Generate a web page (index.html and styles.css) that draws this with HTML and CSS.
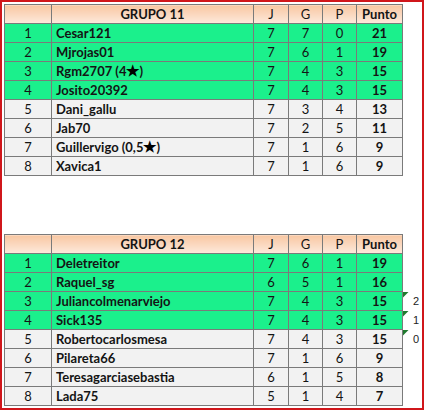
FILE: index.html
```html
<!DOCTYPE html>
<html lang="es">
<head>
<meta charset="utf-8">
<title>Grupos</title>
<link rel="stylesheet" href="styles.css">
</head>
<body>
<div class="frame">
  <table class="grp">
    <colgroup><col class="c-pos"><col class="c-name"><col class="c-j"><col class="c-g"><col class="c-p"><col class="c-pts"><col class="c-note"></colgroup>
    <thead>
      <tr class="head"><th></th><th>GRUPO 11</th><th class="reg">J</th><th class="reg">G</th><th class="reg">P</th><th>Punto</th><td class="note"></td></tr>
    </thead>
    <tbody>
      <tr class="up"><td>1</td><td class="name">Cesar121</td><td>7</td><td>7</td><td>0</td><td class="pts">21</td><td class="note"></td></tr>
      <tr class="up"><td>2</td><td class="name">Mjrojas01</td><td>7</td><td>6</td><td>1</td><td class="pts">19</td><td class="note"></td></tr>
      <tr class="up"><td>3</td><td class="name">Rgm2707 (4<span class="star">★</span>)</td><td>7</td><td>4</td><td>3</td><td class="pts">15</td><td class="note"></td></tr>
      <tr class="up"><td>4</td><td class="name">Josito20392</td><td>7</td><td>4</td><td>3</td><td class="pts">15</td><td class="note"></td></tr>
      <tr><td>5</td><td class="name">Dani_gallu</td><td>7</td><td>3</td><td>4</td><td class="pts">13</td><td class="note"></td></tr>
      <tr><td>6</td><td class="name">Jab70</td><td>7</td><td>2</td><td>5</td><td class="pts">11</td><td class="note"></td></tr>
      <tr><td>7</td><td class="name">Guillervigo (0,5<span class="star">★</span>)</td><td>7</td><td>1</td><td>6</td><td class="pts">9</td><td class="note"></td></tr>
      <tr><td>8</td><td class="name">Xavica1</td><td>7</td><td>1</td><td>6</td><td class="pts">9</td><td class="note"></td></tr>
    </tbody>
  </table>

  <table class="grp second">
    <colgroup><col class="c-pos"><col class="c-name"><col class="c-j"><col class="c-g"><col class="c-p"><col class="c-pts"><col class="c-note"></colgroup>
    <thead>
      <tr class="head"><th></th><th>GRUPO 12</th><th class="reg">J</th><th class="reg">G</th><th class="reg">P</th><th>Punto</th><td class="note"></td></tr>
    </thead>
    <tbody>
      <tr class="up"><td>1</td><td class="name">Deletreitor</td><td>7</td><td>6</td><td>1</td><td class="pts">19</td><td class="note"></td></tr>
      <tr class="up"><td>2</td><td class="name">Raquel_sg</td><td>6</td><td>5</td><td>1</td><td class="pts">16</td><td class="note"></td></tr>
      <tr class="up"><td>3</td><td class="name">Juliancolmenarviejo</td><td>7</td><td>4</td><td>3</td><td class="pts">15</td><td class="note"><span class="flag"></span>2</td></tr>
      <tr class="up"><td>4</td><td class="name">Sick135</td><td>7</td><td>4</td><td>3</td><td class="pts">15</td><td class="note"><span class="flag"></span>1</td></tr>
      <tr><td>5</td><td class="name">Robertocarlosmesa</td><td>7</td><td>4</td><td>3</td><td class="pts">15</td><td class="note"><span class="flag"></span>0</td></tr>
      <tr><td>6</td><td class="name">Pilareta66</td><td>7</td><td>1</td><td>6</td><td class="pts">9</td><td class="note"></td></tr>
      <tr><td>7</td><td class="name">Teresagarciasebastia</td><td>6</td><td>1</td><td>5</td><td class="pts">8</td><td class="note"></td></tr>
      <tr><td>8</td><td class="name">Lada75</td><td>5</td><td>1</td><td>4</td><td class="pts">7</td><td class="note"></td></tr>
    </tbody>
  </table>
</div>
</body>
</html>
```

FILE: styles.css
```css
html, body {
  margin: 0;
  padding: 0;
  background: #ffffff;
}

.frame {
  box-sizing: border-box;
  width: 424px;
  height: 410px;
  border: 2px solid #d0161b;
  padding: 2px;
  background: #ffffff;
}

.grp {
  border-collapse: collapse;
  table-layout: fixed;
  width: 418px;
  font-family: Lato, "Liberation Sans", sans-serif;
  font-size: 13px;
  color: #141414;
}

.grp.second {
  margin-top: 58px;
}

.c-pos { width: 47px; }
.c-name { width: 202px; }
.c-j { width: 35px; }
.c-g { width: 34px; }
.c-p { width: 34px; }
.c-pts { width: 46px; }
.c-note { width: 20px; }

.grp tr {
  height: 19px;
}

.grp th,
.grp td {
  border: 1px solid #7a7a7a;
  padding: 0;
  text-align: center;
  vertical-align: middle;
  line-height: 16px;
  white-space: nowrap;
  overflow: hidden;
}

.grp th {
  font-weight: 700;
  background: linear-gradient(#f8c7a2, #fde9dc);
}

.grp th.reg {
  font-weight: 400;
}

.grp tbody td {
  background: #f2f2f2;
}

.grp tbody tr.up td {
  background: #1bf08c;
}

.grp td.name {
  text-align: left;
  padding-left: 4px;
  font-weight: 700;
}

.grp td.pts {
  font-weight: 700;
}

.grp td.note,
.grp tbody tr.up td.note,
.grp tbody td.note {
  border: none;
  background: transparent;
  position: relative;
  overflow: visible;
  text-align: left;
  padding-left: 10px;
  font-family: "Liberation Sans", sans-serif;
  font-size: 11px;
  color: #222;
}

.flag {
  position: absolute;
  left: 0;
  top: 0;
  width: 6px;
  height: 6px;
  background: #1f7a2e;
  clip-path: polygon(0 0, 100% 0, 0 100%);
}

.star {
  font-size: 15px;
  line-height: 14px;
  color: #000;
}
```
